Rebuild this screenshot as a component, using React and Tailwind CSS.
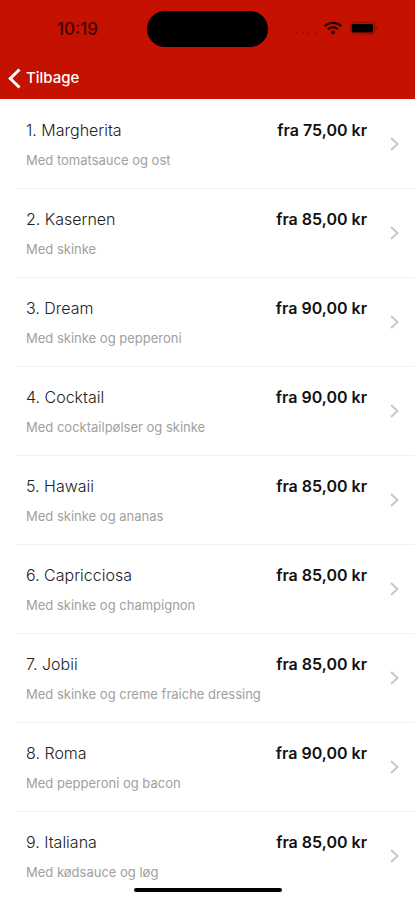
const pizzas = [
  { name: "1. Margherita", toppings: "Med tomatsauce og ost", price: "fra 75,00 kr" },
  { name: "2. Kasernen", toppings: "Med skinke", price: "fra 85,00 kr" },
  { name: "3. Dream", toppings: "Med skinke og pepperoni", price: "fra 90,00 kr" },
  { name: "4. Cocktail", toppings: "Med cocktailpølser og skinke", price: "fra 90,00 kr" },
  { name: "5. Hawaii", toppings: "Med skinke og ananas", price: "fra 85,00 kr" },
  { name: "6. Capricciosa", toppings: "Med skinke og champignon", price: "fra 85,00 kr" },
  { name: "7. Jobii", toppings: "Med skinke og creme fraiche dressing", price: "fra 85,00 kr" },
  { name: "8. Roma", toppings: "Med pepperoni og bacon", price: "fra 90,00 kr" },
  { name: "9. Italiana", toppings: "Med kødsauce og løg", price: "fra 85,00 kr" },
];

function StatusBar() {
  return (
    <div className="grid h-[58px] grid-cols-[1fr_121px_1fr] items-center">
      <time className="pl-2 text-center text-[17px] leading-6 font-medium text-[#400400]">10:19</time>
      <div className="h-9 rounded-full bg-black" />
      <div className="flex items-center gap-2 pb-0.5 pl-7">
        <svg width="20" height="4" viewBox="0 0 20 4" className="mt-2.5" fill="#a20e02" aria-hidden="true">
          <rect x="0" y="1" width="2" height="2" />
          <rect x="6" y="1" width="2" height="2" />
          <rect x="12" y="1" width="2" height="2" />
          <rect x="18" y="1" width="2" height="2" />
        </svg>
        <svg width="18" height="14" viewBox="0 0 18 14" fill="none" stroke="#250200" strokeWidth="2.2" aria-hidden="true">
          <path d="M0.6 5.2C5.2 0.7 12.8 0.7 17.4 5.2" />
          <path d="M4 8.4C7 5.6 11 5.6 14 8.4" />
          <circle cx="9" cy="11.4" r="1.9" fill="#250200" stroke="none" />
        </svg>
        <svg width="29" height="14" viewBox="0 0 29 14" aria-hidden="true">
          <rect x="0.8" y="1.4" width="24" height="11.6" rx="3.5" fill="none" stroke="#a50d01" strokeWidth="1.6" />
          <rect x="1.8" y="3" width="21.4" height="8.4" rx="1.5" fill="#000" />
          <path d="M26 5C28.2 5.5 28.2 8.7 26 9.2Z" fill="#a00c01" />
        </svg>
      </div>
    </div>
  );
}

function PizzaRow({ name, toppings, price }) {
  return (
    <li className="group pl-4">
      <a
        href="#"
        className="flex h-[89px] items-center border-b border-[#f2f2f2] pr-4 pl-[10px] group-last:h-[88px] group-last:border-b-0"
      >
        <div className="min-w-0 flex-1">
          <div className="flex items-center justify-between">
            <h2 className="text-base leading-6 font-light text-[#222]">{name}</h2>
            <span className="text-base leading-6 font-semibold text-[#111]">{price}</span>
          </div>
          <p className="mt-2 text-[13px] leading-5 font-normal text-[#a0a0a0]">{toppings}</p>
        </div>
        <svg
          width="9"
          height="14"
          viewBox="0 0 9 14"
          className="ml-[23px] shrink-0"
          fill="none"
          stroke="#c6c6c8"
          strokeWidth="1.9"
          aria-hidden="true"
        >
          <path d="M1 1L7.5 7L1 13" />
        </svg>
      </a>
    </li>
  );
}

export default function App() {
  return (
    <div className="relative min-h-screen bg-white font-['Inter','Liberation_Sans',sans-serif]">
      <header className="bg-[#c51200]">
        <StatusBar />
        <button type="button" className="flex h-[41px] items-center gap-1 pl-2 text-[15px] font-medium text-white">
          <svg width="14" height="21" viewBox="0 0 14 21" fill="none" stroke="currentColor" strokeWidth="3" aria-hidden="true">
            <path d="M11.5 1.5L2.3 10.5L11.5 19.5" />
          </svg>
          Tilbage
        </button>
      </header>
      <main>
        <ul className="pt-px">
          {pizzas.map((pizza) => (
            <PizzaRow key={pizza.name} {...pizza} />
          ))}
        </ul>
      </main>
      <div className="absolute inset-x-0 bottom-2 mx-auto h-1 w-[148px] rounded-full bg-black" />
    </div>
  );
}
